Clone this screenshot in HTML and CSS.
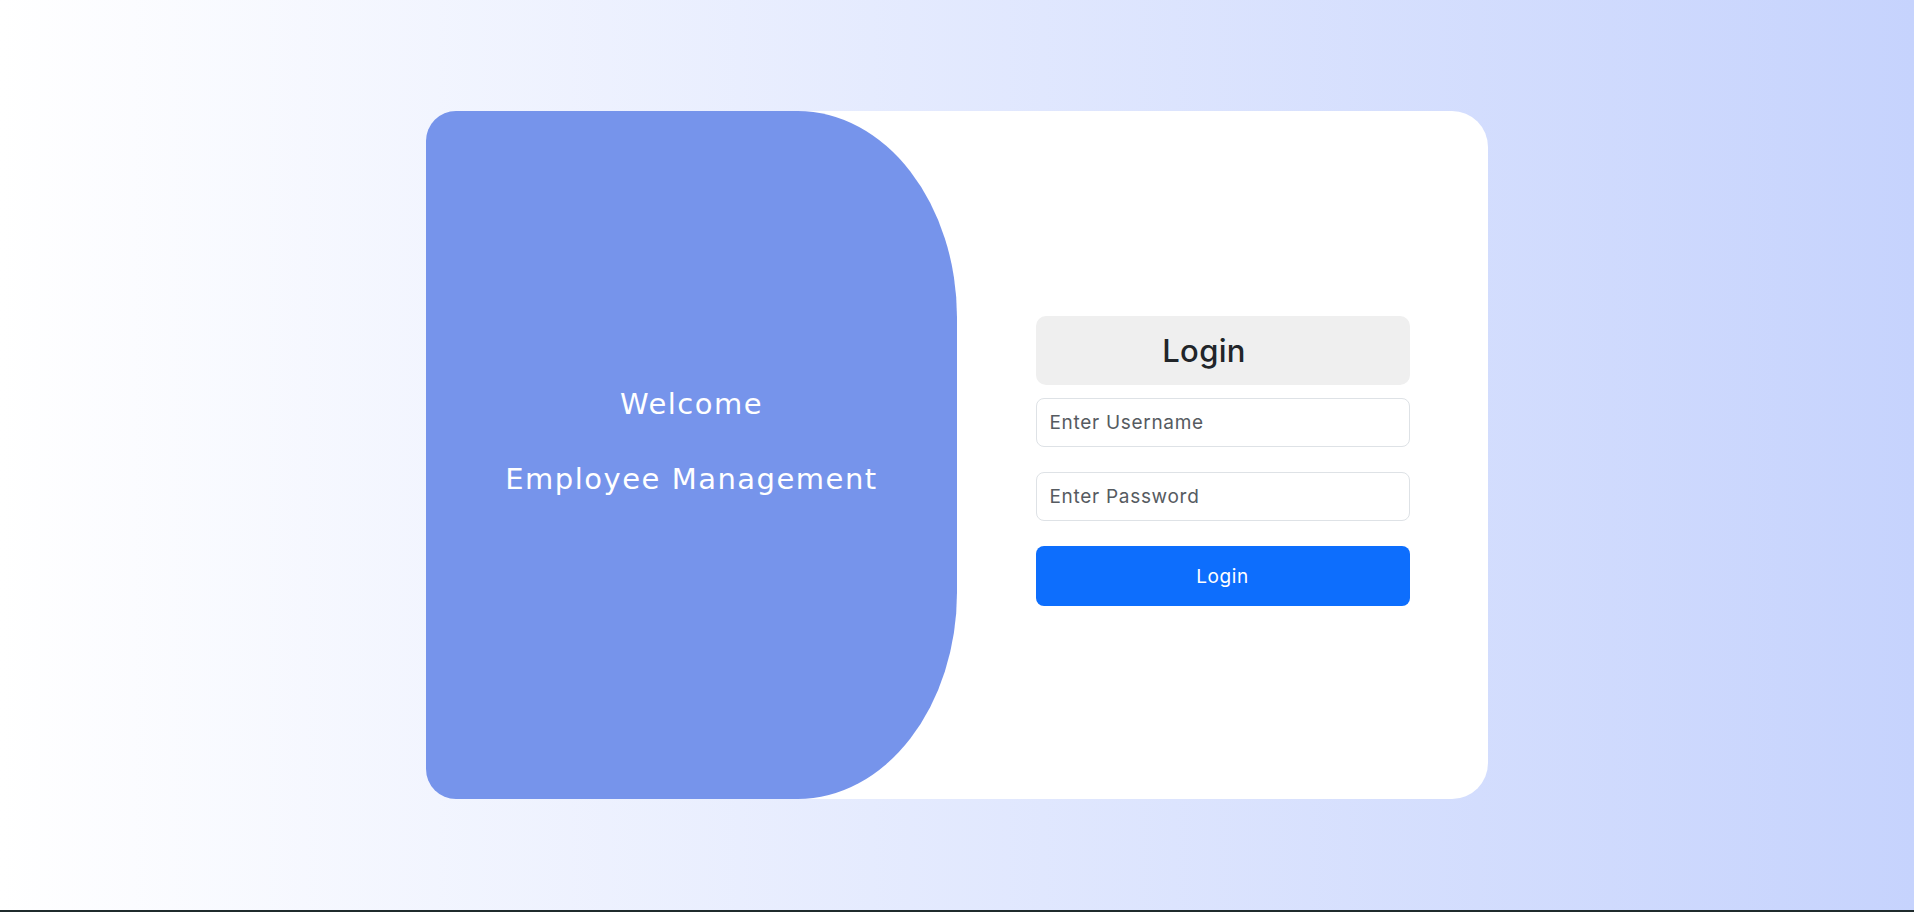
FILE: index.html
```html
<!DOCTYPE html>
<html lang="en">
<head>
<meta charset="utf-8">
<title>Login</title>
<link rel="stylesheet" href="styles.css">
</head>
<body>
<main class="page">
  <section class="card">
    <div class="welcome">
      <p class="welcome-line">Welcome</p>
      <p class="welcome-line">Employee Management</p>
    </div>
    <div class="login-side">
      <form class="login-form">
        <h3 class="login-title">Login</h3>
        <input class="field" type="text" placeholder="Enter Username">
        <input class="field" type="password" placeholder="Enter Password">
        <button class="login-btn" type="button">Login</button>
      </form>
    </div>
  </section>
</main>
<div class="bottom-bar"></div>
</body>
</html>
```

FILE: styles.css
```css
* { box-sizing: border-box; }
html, body { margin: 0; padding: 0; }
body {
  height: 912px;
  overflow: hidden;
  font-family: "Inter", "Liberation Sans", sans-serif;
  background: linear-gradient(to right, #ffffff 0%, #c6d3fd 100%);
  display: flex;
  flex-direction: column;
}
.page {
  height: 910px;
  display: flex;
  align-items: center;
  justify-content: center;
}
.bottom-bar {
  height: 2px;
  background: #1f2b2c;
}
.card {
  width: 1062px;
  height: 688px;
  background: #ffffff;
  border-radius: 36px;
  display: flex;
}
.welcome {
  width: 531px;
  background: #7694eb;
  border-radius: 30px 30% 30% 30px / 30px 30% 30% 30px;
  display: flex;
  flex-direction: column;
  align-items: center;
  justify-content: center;
  gap: 40px;
  color: #ffffff;
  padding-bottom: 27px;
}
.welcome-line {
  margin: 0;
  font-family: "DejaVu Sans", "Inter", sans-serif;
  font-size: 29px;
  line-height: 1.2;
  font-weight: 400;
  letter-spacing: 1.5px;
}
.login-side {
  flex: 1;
  display: flex;
  align-items: center;
  justify-content: center;
}
.login-form {
  width: 374px;
  padding-top: 12px;
  display: flex;
  flex-direction: column;
}
.login-title {
  margin: 0 0 13px 0;
  height: 69px;
  background: #efefef;
  border-radius: 10px;
  font-size: 31px;
  font-weight: 500;
  color: #212529;
  display: flex;
  align-items: center;
  justify-content: center;
  padding-right: 37px;
  letter-spacing: 0.3px;
}
.field {
  height: 49px;
  border: 1px solid #dee2e6;
  border-radius: 8px;
  padding: 0 13px;
  font-family: inherit;
  font-size: 19px;
  letter-spacing: 0.7px;
  color: #212529;
  margin: 0 0 25px 0;
  background: #ffffff;
}
.field::placeholder { color: #565b61; }
.login-btn {
  height: 60px;
  border: none;
  border-radius: 8px;
  background: #0d6efd;
  color: #ffffff;
  font-family: inherit;
  font-size: 19px;
  letter-spacing: 0.6px;
}
```
